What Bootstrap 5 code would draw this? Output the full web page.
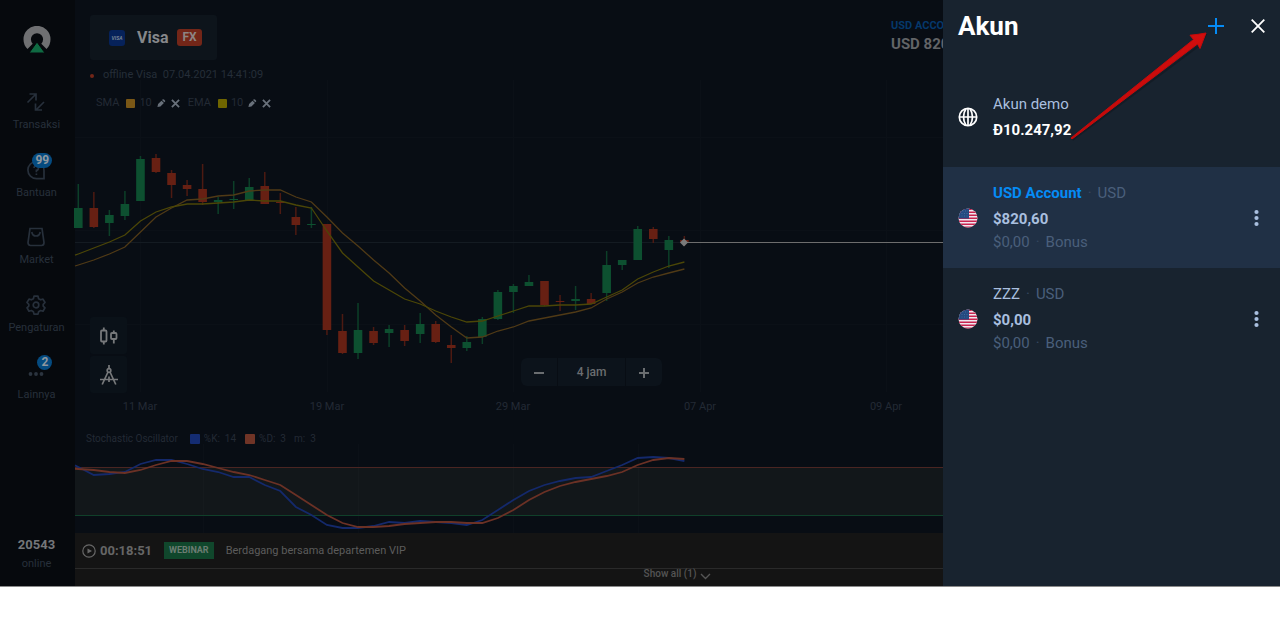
<!DOCTYPE html>
<html lang="id">
<head>
<meta charset="utf-8">
<meta name="viewport" content="width=device-width, initial-scale=1">
<title>Akun</title>
<link href="https://cdn.jsdelivr.net/npm/bootstrap@5.3.0/dist/css/bootstrap.min.css" rel="stylesheet">
<style>
  body { font-family: Roboto, sans-serif; font-size: 11px; line-height: 18px; background: #fff; }
  button { font-family: inherit; }
  a { text-decoration: none; color: inherit; }
  .app { background: #080d14; border-bottom: 1px solid #8a8a8a; }

  /* left navigation */
  .side { width: 75px; background: #06090d; color: #27303b; padding: 26px 2px 13px 0; }
  .side-list { height: 314px; margin-top: 39px; }
  .side-list a { height: 44px; }
  .side-icon { height: 24px; }
  .pill { left: 50%; top: -7px; margin-left: -4px; font-size: 12px; line-height: 15px; height: 15px; min-width: 15px; padding: 0 3px; background: #054b80; color: #8e979e; font-weight: 700; border-radius: 8px; }
  .pill-small { margin-left: 1px; padding: 0 4px; }
  .online-count { font-size: 13px; color: #747679; font-weight: 700; line-height: 20px; }

  /* chart area */
  .workspace { min-width: 0; }
  .topbar { padding: 15px 337px 0 15px; }
  .asset { height: 45px; background: #0d141b; color: #85878a; border: 0; border-radius: 3px; padding: 0 15px 0 19px; font-size: 16px; font-weight: 700; }
  .visa-logo { width: 16px; height: 16px; border-radius: 3px; background: #06225a; color: #7b8494; font-size: 5px; line-height: 16px; margin-right: 12px; font-style: italic; }
  .fx { height: 17px; line-height: 17px; padding: 0 5px; background: #732618; color: #8d8583; border-radius: 3px; font-size: 12px; margin-left: 9px; }
  .balance { width: 52px; color: #626467; font-size: 15px; font-weight: 700; }
  .balance-name { font-size: 11px; margin-top: 2px; color: #05386b; }
  .status { margin-top: 6px; padding-left: 15px; color: #252d38; }
  .dot { width: 4px; height: 4px; background: #732618; margin-right: 9px; margin-top: 2px; }
  .legend { color: #232a34; }
  .legend-top { margin-top: 10px; padding-left: 21px; }
  .legend-osc { padding: 10px 0 0 11px; font-size: 10px; }
  .swatch { width: 9px; height: 9px; border-radius: 1px; margin: 0 4px 0 7px; }
  .legend-osc .swatch { width: 10px; height: 10px; margin-left: 9px; }
  .legend-osc .swatch-first { margin-left: 12px; }
  .icon-btn { border: 0; background: none; padding: 0; margin-left: 5px; width: 9px; height: 18px; color: #68707a; display: flex; align-items: center; }
  .plot { display: block; width: 100%; overflow: visible; }
  .price { height: 308px; }
  .osc { height: 85px; }
  .plot text { font-size: 11px; fill: #232a34; text-anchor: middle; }
  .tools { left: 15px; bottom: 27px; gap: 2px; }
  .tool { width: 37px; height: 37px; border: 0; border-radius: 3px; background: #0a1118; color: #77797b; padding: 0; }
  .frame { left: 446px; bottom: 34px; gap: 1px; }
  .frame button { height: 28px; width: 36px; border: 0; background: #0c131b; color: #6a6d70; padding: 0; font-size: 12px; font-weight: 500; }
  .frame button:nth-child(2) { width: 67px; }

  /* announcements */
  .news { background: #141414; color: #5c5c5c; }
  .news-row { height: 36px; padding-left: 7px; border-bottom: 1px solid #2a2a2a; }
  .timer { font-size: 13px; font-weight: 700; color: #666; margin: 0 12px 0 4px; }
  .tag { background: #10472c; color: #6b7c72; font-size: 9px; font-weight: 700; line-height: 17px; padding: 0 5px; margin-right: 12px; }
  .show-all { height: 17px; font-size: 10px; font-weight: 500; line-height: 10px; border: 0; background: none; color: #555; padding: 0 0 7px; }

  /* account panel */
  .accounts { width: 337px; background: #18232f; color: #4a5f7b; font-size: 15px; }
  .accounts-head { height: 52px; padding: 0 13px 0 15px; margin-bottom: 14px; }
  .accounts-head h1 { font-size: 26px; font-weight: 700; color: #fff; line-height: 32px; }
  .accounts-head button { width: 18px; height: 18px; border: 0; background: none; padding: 0; display: flex; align-items: center; justify-content: center; }
  .account { height: 101px; padding: 0 20px 0 15px; gap: 15px; }
  .account.current { background: #203045; }
  .account button { border: 0; background: none; padding: 0; width: 7px; height: 18px; color: #a9bfdf; display: flex; }
  .line-a { line-height: 26px; color: #a9bfdf; }
  .line-b { line-height: 26px; color: #a9bfdf; font-weight: 700; }
  .line-c { line-height: 20px; margin-bottom: 3px; }
  .quiet { color: #4a5f7b; }
  .demo-sum { line-height: 26px; color: #fff; font-weight: 700; }
  .current-name { color: #058bf5; font-weight: 700; }
  .sep { margin: 0 6px; color: #34475f; }
  .pointer { right: 70px; top: 28px; pointer-events: none; }
</style>
</head>
<body>
<div class="app d-flex position-relative overflow-hidden">

  <nav class="side d-flex flex-column align-items-center text-center flex-shrink-0">
    <a href="#" aria-label="Beranda">
      <svg width="28" height="27" viewBox="0 0 28 27" class="d-block">
        <path d="M7.100 20.300a9.800 9.800 0 1 1 13.800 0" fill="none" stroke="#6f7072" stroke-width="7.400"/>
        <path d="M14 16l8 11H6z" fill="#0f6a42" stroke="#06090d" stroke-width="1"/>
      </svg>
    </a>
    <div class="side-list d-flex flex-column justify-content-between">
      <a href="#"><div class="side-icon">
        <svg width="20" height="20" viewBox="0 0 20 20" fill="none" stroke="currentColor" stroke-width="1.700"><path d="M1.500 10.500L9.500 2.500M3.500 2H10V8.500M18 10l-8 8M9.500 11.500V18H16"/></svg></div>
        <div>Transaksi</div></a>
      <a href="#"><div class="side-icon position-relative">
        <svg width="20" height="20" viewBox="0 0 20 20" fill="none" stroke="currentColor" stroke-width="1.700"><path d="M10.500 1.500a8.600 8.600 0 1 0 0 17.200H18v-8a8.600 8.600 0 0 0-7.500-9.200z"/><path d="M8 8a2.200 2.200 0 1 1 2.400 2.300v1.900M10.400 13.500v1.500"/></svg>
        <span class="pill position-absolute">99</span></div>
        <div>Bantuan</div></a>
      <a href="#"><div class="side-icon">
        <svg width="20" height="20" viewBox="0 0 20 20" fill="none" stroke="currentColor" stroke-width="1.700"><path d="M4 1.500h12L18 15.500q0 3-2.500 3h-11q-2.500 0-2.500-3z"/><path d="M5.800 5q.6 4 4.200 4t4.200-4"/></svg></div>
        <div>Market</div></a>
      <a href="#"><div class="side-icon">
        <svg width="20" height="20" viewBox="0 0 20 20" fill="none" stroke="currentColor" stroke-width="1.700" stroke-linejoin="round"><path d="M8 1.200h4l.6 2.500 2 1.100 2.400-.7 2 3.400-1.800 1.800v1.800l1.800 1.700-2 3.400-2.400-.7-2 1.200-.6 2.400H8l-.6-2.400-2-1.200-2.400.7-2-3.400 1.800-1.700V9.300L1 7.500l2-3.400 2.400.7 2-1.100z"/><circle cx="10" cy="10" r="2.800"/></svg></div>
        <div>Pengaturan</div></a>
      <a href="#"><div class="side-icon position-relative">
        <svg width="20" height="20" viewBox="0 0 20 20" fill="#2b343f"><circle cx="4.500" cy="12" r="1.900"/><circle cx="10" cy="12" r="1.900"/><circle cx="15.500" cy="12" r="1.900"/></svg>
        <span class="pill pill-small position-absolute">2</span></div>
        <div>Lainnya</div></a>
    </div>
    <div class="mt-auto">
      <div class="online-count">20543</div>
      <div>online</div>
    </div>
  </nav>

  <main class="workspace flex-grow-1 d-flex flex-column">
    <div class="topbar d-flex justify-content-between align-items-start">
      <button class="asset d-flex align-items-center" type="button">
        <span class="visa-logo">VISA</span>Visa<span class="fx">FX</span>
      </button>
      <div class="balance overflow-hidden text-nowrap">
        <div class="balance-name">USD ACCOUNT</div>
        <div>USD 820,60</div>
      </div>
    </div>
    <div class="status d-flex align-items-center"><span class="dot rounded-circle"></span><span>offline Visa&nbsp; 07.04.2021 14:41:09</span></div>
    <div class="legend legend-top d-flex align-items-center">
      <span>SMA</span><span class="swatch" style="background:#7a5716"></span><span>10</span>
      <button class="icon-btn" type="button" aria-label="Ubah SMA"><svg width="9" height="10" viewBox="0 0 10 10" fill="currentColor"><path d="M.5 9.500l.7-3.300L5 2.400l2.700 2.700-3.900 3.700zM5.600 1.800l1-1 1.200.2 1.300 1.400v.9l-1 1z"/></svg></button>
      <button class="icon-btn" type="button" aria-label="Hapus SMA"><svg width="9" height="9" viewBox="0 0 10 10" stroke="currentColor" stroke-width="2"><path d="M1 1l8 8M9 1L1 9"/></svg></button>
      <span class="ms-1 ps-1">EMA</span><span class="swatch" style="background:#6f6500"></span><span>10</span>
      <button class="icon-btn" type="button" aria-label="Ubah EMA"><svg width="9" height="10" viewBox="0 0 10 10" fill="currentColor"><path d="M.5 9.500l.7-3.300L5 2.400l2.700 2.700-3.900 3.700zM5.600 1.800l1-1 1.200.2 1.300 1.400v.9l-1 1z"/></svg></button>
      <button class="icon-btn" type="button" aria-label="Hapus EMA"><svg width="9" height="9" viewBox="0 0 10 10" stroke="currentColor" stroke-width="2"><path d="M1 1l8 8M9 1L1 9"/></svg></button>
    </div>

    <div class="position-relative">
      <svg class="plot price" id="price"></svg>
      <div class="tools position-absolute d-flex flex-column">
        <button class="tool" type="button" aria-label="Jenis grafik"><svg width="18" height="18" viewBox="0 0 18 18" fill="none" stroke="currentColor" stroke-width="1.800"><rect x="1" y="3.500" width="5.500" height="11" rx="1"/><rect x="11" y="6" width="5.500" height="6" rx="1"/><path d="M3.800 .5v3M3.800 14.500v3M13.800 3.500v3M13.800 12v4.500"/></svg></button>
        <button class="tool" type="button" aria-label="Alat gambar"><svg width="20" height="20" viewBox="0 0 20 20" fill="none" stroke="currentColor" stroke-width="1.700"><path d="M10 0v4M9 7L3.200 19.500M11 7l5.800 12.500M1 14.500h18M10 11.500v5.500"/><circle cx="10" cy="5.500" r="1.800"/></svg></button>
      </div>
      <div class="frame position-absolute d-flex">
        <button class="rounded-start" type="button" aria-label="Perkecil"><svg width="10" height="10" viewBox="0 0 10 10" stroke="currentColor" stroke-width="2"><path d="M0 5h10"/></svg></button>
        <button type="button">4 jam</button>
        <button class="rounded-end" type="button" aria-label="Perbesar"><svg width="10" height="10" viewBox="0 0 10 10" stroke="currentColor" stroke-width="2"><path d="M0 5h10M5 0v10"/></svg></button>
      </div>
    </div>

    <div class="legend legend-osc d-flex align-items-center">
      <span>Stochastic Oscillator</span>
      <span class="swatch swatch-first" style="background:#142c72"></span><span>%K:&nbsp; 14</span>
      <span class="swatch" style="background:#703426"></span><span>%D:&nbsp; 3</span>
      <span class="ms-2">m:&nbsp; 3</span>
    </div>
    <svg class="plot osc" id="osc"></svg>

    <div class="news">
      <div class="news-row d-flex align-items-center">
        <svg width="14" height="14" viewBox="0 0 14 14" fill="none" stroke="#686868" stroke-width="1.200"><circle cx="7" cy="7" r="6.200"/><path d="M5.500 4.500v5L10 7z" fill="#686868" stroke="none"/></svg>
        <span class="timer">00:18:51</span>
        <span class="tag">WEBINAR</span>
        <span>Berdagang bersama departemen VIP</span>
      </div>
      <button class="show-all d-flex align-items-center justify-content-center w-100" type="button">Show all (1)<svg class="ms-1 mt-1" width="11" height="7" viewBox="0 0 11 7" fill="none" stroke="currentColor" stroke-width="1.400"><path d="M1 1l4.500 4.500L10 1"/></svg></button>
    </div>
  </main>

  <aside class="accounts position-absolute top-0 end-0 bottom-0">
    <div class="accounts-head d-flex align-items-center">
      <h1 class="mb-0 me-auto">Akun</h1>
      <button type="button" aria-label="Tambah akun"><svg width="18" height="18" viewBox="0 0 18 18" stroke="#058bf5" stroke-width="2"><path d="M1 9h16M9 1v16"/></svg></button>
      <button class="ms-4" type="button" aria-label="Tutup"><svg width="14" height="14" viewBox="0 0 14 14" stroke="#fff" stroke-width="1.800"><path d="M.7.7l12.600 12.600M13.300.7L.7 13.300"/></svg></button>
    </div>
    <div class="account d-flex align-items-center">
      <svg width="20" height="20" viewBox="0 0 20 20" fill="none" stroke="#fff" stroke-width="1.700"><circle cx="10" cy="10" r="8.700"/><path d="M1.300 10h17.400M10 1.300v17.400M8 1.500q-5 8.500 0 17M12 1.500q5 8.500 0 17"/></svg>
      <div><div class="line-a">Akun demo</div><div class="demo-sum">Đ10.247,92</div></div>
    </div>
    <div class="account current d-flex align-items-center">
      <svg width="20" height="20" viewBox="0 0 20 20"><use href="#us"/></svg>
      <div class="me-auto">
        <div class="line-a"><span class="current-name">USD Account</span><span class="sep">·</span><span class="quiet">USD</span></div>
        <div class="line-b">$820,60</div>
        <div class="line-c">$0,00<span class="sep">·</span>Bonus</div>
      </div>
      <button type="button" aria-label="Opsi USD Account"><svg width="7" height="18" viewBox="0 0 7 18" fill="currentColor"><circle cx="3.500" cy="3" r="2.100"/><circle cx="3.500" cy="9" r="2.100"/><circle cx="3.500" cy="15" r="2.100"/></svg></button>
    </div>
    <div class="account d-flex align-items-center">
      <svg width="20" height="20" viewBox="0 0 20 20">
        <defs>
          <clipPath id="round"><circle cx="10" cy="10" r="9.500"/></clipPath>
          <g id="us" clip-path="url(#round)">
            <path fill="#f0e6ee" d="M0 0h20v20H0z"/>
            <path stroke="#c8234f" stroke-width="1.500" d="M0 1.200h20M0 4.200h20M0 7.200h20M0 10.200h20M0 13.200h20M0 16.200h20M0 19.200h20"/>
            <path fill="#244a80" d="M0 0h11v10.500H0z"/>
            <path stroke="#426698" stroke-width="1" stroke-dasharray="1 1.500" d="M2 3h8M1 5.500h9M1 8h9"/>
          </g>
        </defs>
        <use href="#us"/>
      </svg>
      <div class="me-auto">
        <div class="line-a">ZZZ<span class="sep">·</span><span class="quiet">USD</span></div>
        <div class="line-b">$0,00</div>
        <div class="line-c">$0,00<span class="sep">·</span>Bonus</div>
      </div>
      <button type="button" aria-label="Opsi ZZZ"><svg width="7" height="18" viewBox="0 0 7 18" fill="currentColor"><circle cx="3.500" cy="3" r="2.100"/><circle cx="3.500" cy="9" r="2.100"/><circle cx="3.500" cy="15" r="2.100"/></svg></button>
    </div>
    <svg class="pointer position-absolute" width="140" height="114" viewBox="0 0 140 114">
      <defs><linearGradient id="red" x1="0" y1="0" x2=".3" y2="1"><stop offset="0" stop-color="#d81010"/><stop offset="1" stop-color="#c00808"/></linearGradient></defs>
      <path d="M2.500 112L126 20l3-2.300L136.500 6" fill="none" stroke="#0c1218" stroke-opacity=".35" stroke-width="2"/>
      <path d="M1 110L123.500 11.500l-3.500-4.300Q128 6.500 136 5l-6 15.500-2.500-4.500L2 111z" fill="url(#red)" stroke="#c40a0a" stroke-width="1"/>
    </svg>
  </aside>
</div>

<script src="https://cdn.jsdelivr.net/npm/bootstrap@5.3.0/dist/js/bootstrap.bundle.min.js"></script>
<script>
  // One entry per 4-hour candle: direction, high, open/close top, open/close bottom, low
  const candles = [
    ['u',184,208,228,228],['d',192,208,227,228],['u',210,215,223,236],['u',191,204,216,220],['u',156,159,201,201],
    ['d',154,158,172,173],['d',170,173,185,198],['d',180,185,189,196],['d',164,189,202,205],['u',197,200,202,214],
    ['u',181,199,200,209],['u',178,187,200,200],['d',172,186,204,204],['d',193,202,203,214],['d',207,217,225,235],
    ['u',207,224,225,228],['d',224,224,330,335],['d',314,331,353,354],['u',303,330,353,359],['d',327,331,343,345],
    ['u',325,329,333,347],['d',325,330,341,346],['u',313,324,334,343],['d',321,324,342,343],['d',335,345,348,363],
    ['u',336,342,348,351],['u',317,319,337,344],['u',290,292,319,320],['u',284,286,292,313],['u',275,282,286,286],
    ['d',281,281,305,306],['d',295,301,302,311],['u',286,299,301,310],['d',293,299,304,304],['u',251,265,293,301],
    ['u',260,260,265,270],['u',226,229,260,260],['d',227,229,239,243],['u',236,240,250,268],['d',236,240,242,246]];
  const ema = [254,248,242,235,221,212,207,204,204,203,202,200,201,201,205,208,231,253,267,281,290,299,304,311,317,322,321,316,311,306,306,305,305,304,297,290,279,272,266,262];
  const sma = [265,260,254,247,232,217,208,200,199,196,195,191,190,190,197,202,217,233,246,260,273,288,301,315,327,338,337,331,327,321,318,315,312,308,299,292,283,277,273,269];
  const k = [467,475,474,472,464,460,460,464,469,472,477,477,485,491,507,515,525,528,528,526,522,523,521,522,523,525,520,510,500,491,485,481,478,477,471,465,458,457,458,461];
  const d = [469,470,472,473,470,465,461,461,464,468,472,475,480,485,495,505,515,523,527,527,526,524,523,522,522,523,523,518,510,500,492,486,482,479,476,472,465,460,458,459];

  const x = i => 3.3 + i * 15.54;
  const line = (data, top, color, width) => {
    const first = data[0] + (data[0] - data[1]) * .2;
    const points = ['0,' + (first - top).toFixed(1)].concat(data.map((v, i) => x(i).toFixed(1) + ',' + (v - top)));
    return `<polyline points="${points.join(' ')}" fill="none" stroke="${color}" stroke-width="${width}"/>`;
  };
  const dates = ['11 Mar', '19 Mar', '29 Mar', '07 Apr', '09 Apr'];

  let out = '';
  dates.forEach((label, i) => {
    const gx = Math.round(x(4 + 12 * i));
    out += `<path d="M${gx}.5 -32V280" stroke="#0b1017"/><text x="${gx}" y="298">${label}</text>`;
  });
  [25, 118, 212].forEach(y => out += `<path d="M0 ${y}.5H1205" stroke="#0b1017"/>`);
  out += '<path d="M0 130.500H609" stroke="#141b22"/>';
  candles.forEach(([dir, hi, top, bottom, lo], i) => {
    const c = dir === 'u' ? ['#0d5030', '#0c3f28'] : ['#672013', '#4d1a12'];
    out += `<path d="M${x(i)} ${hi - 112}V${lo - 112}" stroke="${c[1]}" stroke-width="1.500"/>` +
           `<rect x="${x(i) - 4.3}" y="${top - 112}" width="8.600" height="${bottom - top}" fill="${c[0]}"/>`;
  });
  out += line(sma, 112, '#503a16', 1.3) + line(ema, 112, '#4b4607', 1.3);
  out += '<path d="M609 130.500H1205" stroke="#6d6d6d"/><path d="M609 126.500l4 4-4 4-4-4z" fill="#7a7a7a"/>';
  document.getElementById('price').innerHTML = out;

  document.getElementById('osc').innerHTML =
    '<rect y="20" width="100%" height="48" fill="#12171a"/>' +
    '<path d="M128.500 -4V85M283.500 -4V85M438.500 -4V85M563.500 -4V85" stroke="#fff" stroke-opacity=".015"/>' +
    '<path d="M0 19.500H1205" stroke="#4a2522"/><path d="M0 67.500H1205" stroke="#10402a"/>' +
    line(k, 448, '#14296b', 1.8) + line(d, 448, '#6b3125', 1.8);
</script>
</body>
</html>
